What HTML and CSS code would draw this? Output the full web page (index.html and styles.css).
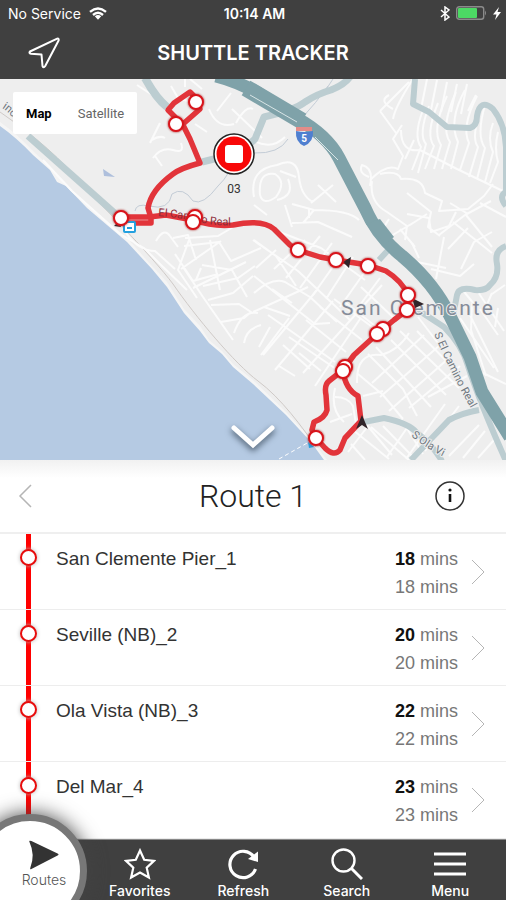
FILE: index.html
```html
<!DOCTYPE html>
<html lang="en">
<head>
<meta charset="utf-8">
<meta name="viewport" content="width=device-width, initial-scale=1">
<title>Shuttle Tracker</title>
<link rel="stylesheet" href="styles.css">
</head>
<body>
<div class="app">
  <header class="top">
    <div class="status">
      <span class="carrier">No Service
        <svg width="18" height="13" viewBox="0 0 18 13" aria-hidden="true"><g fill="none" stroke="#fff" stroke-width="2.4"><path d="M1 4.8Q9-2 17 4.8"/><path d="M4 8Q9 3.6 14 8"/></g><path d="M5.800 9.300Q9 6.800 12.200 9.300L9 12.800z" fill="#fff"/></svg>
      </span>
      <time class="clock">10:14 AM</time>
      <span class="power">
        <svg width="10" height="15" viewBox="0 0 10 15" aria-hidden="true"><path d="M1 4l8 7-4 3V1l4 3-8 7" fill="none" stroke="#fff" stroke-width="1.5"/></svg>
        <svg width="31" height="14" viewBox="0 0 31 14" aria-hidden="true"><rect x=".7" y=".7" width="27" height="12.600" rx="2.500" fill="none" stroke="#8b8b8b" stroke-width="1.400"/><rect x="2" y="2" width="19" height="10" rx="1" fill="#4cd964"/><path d="M29 4.500q2 2.500 0 5z" fill="#8b8b8b"/></svg>
        <svg width="8" height="13" viewBox="0 0 8 13" aria-hidden="true"><path d="M6 0L0 7.500h3.500L2 13l6-8H4.500z" fill="#fff"/></svg>
      </span>
    </div>
    <div class="bar">
      <button class="icon-btn locate" aria-label="My location">
        <svg width="32" height="32" viewBox="0 0 32 32"><path d="M29.200 1.600L2 14.500Q.5 16.300 3 16.800L13.500 17.500 14.500 29Q15.600 31.500 17.200 29L30.600 3.500Q31 1 29.200 1.600z" fill="none" stroke="#fff" stroke-width="2" stroke-linejoin="round"/></svg>
      </button>
      <h1>SHUTTLE TRACKER</h1>
    </div>
  </header>

  <section class="map" aria-label="Route map">
    <svg class="map-art" viewBox="0 79 506 381" preserveAspectRatio="xMidYMid slice">
      <rect y="79" width="506" height="381" fill="#eee"/>
      <path d="M0 122Q17 134 33 151L52 169 60 179 87 204 127 238 152 266 167 282 184 309 200 326 209 340 222 351 233 364 253 380 286 412 311 439 327 460H0z" fill="#f5f5f5"/>
      <path d="M0 126Q17 138 33 155L50 170 57 182 66 186 87 208 127 242 152 269 167 287 184 313 200 331 209 343 222 354 233 367 253 384 286 415 311 442 324 460H0z" fill="#b5cae3"/>
      <path d="M0 112Q55 150 80 183L118 222Q158 264 173 284C195 316 235 364 258 381S303 428 316 447" fill="none" stroke="#cfcac7"/>
      <path d="M103 169l1 7 11 1z" fill="#aebfdc"/>

      <g class="streets">
        <path d="M137 85l23 15M171 86l7 12 13 4M185 79v8M160 123l-10 20M195 124l12 8M152 140q8-5 13-2M153 158q8-11 20-8 12 4 8-7M155 156l7 10M209 109q8 20 25 15M217 111l14-18M232 109l21 20 9 9M236 123q10-18 17-14M254 141q18 9 31-4M190 79l12 10M43 160l29 31 48 43 24 14 18 18 25 24M126 233q13 18 29 18l20 18M156 241q8-14 14-5l8 11M173 238l15-3 8 25M184 246l35-4 12 19 30-13M175 254l18 27 25-7M181 269l40-28M189 240l-11 30 19 28M193 288q25-12 53-26M202 265l30 5 15 27M210 240l10 50M185 238l33-2 17-10"/>
        <path d="M183 267l20 30 30 43M203 286l35-8 17-12M208 300l25-7 20-17M211 305l28-1 12 8-7 6-23 4M234 333q8-23 24-20M244 343q2-14 17-18M196 280l5-12"/>
        <path d="M254 197q-5-28 23-32 20-9 22 12 2 19 14 25M260 195q-2-24 15-21 12 8 1 23-13 9-16-2M280 171l16 6M277 200q18-4 11-21M292 204l22 6q35 0 45 10M311 203l22-18M318 185l18 17M314 210l-11 13M285 205l7 22M292 223l26-1 34 15M309 218v-9M254 205l13 10M254 240l22 16 20 30M274 269l31-29M286 278l34-42M300 288l32-45M313 295l29-41M326 299l27-42M340 307l29-41M354 313l26-35M253 240l45 31 52 49M264 226l57 22 44 32M256 268l20-18"/>
        <path d="M370 186q4-18-8-21-4 8 7 12M370 180q17-17 28-11l5-13-10-17 9-14M380 111l29-29M380 111l16 22M393 109q-15-8-4-14M401 130q0 23 19 20l37 19 48 23M372 181q-3 21 15 31l20 14-2 14M380 174q18-4 21 5 22-2 24 14l17 8-3 10 29-2 16-13 9-12M407 193l24 19-3 15 12 9M407 214l22 4 2 14 18-6 7-14M439 235l26-20 26-14M453 222l39 31M466 215l26 32M480 203l26 14M444 237l-8 42M389 219l-10 16M413 223l-22 13M400 229l15 18M427 214l-17 11M450 203l18 11"/>
        <path d="M414 140q-6 13-9 19M423 110q-10 26-2 37l-9 23M429 106q-11 29-3 38l-8 29M438 103q-13 32-4 43l-9 23M447 96q-16 34-6 49l-7 24M456 92q-16 36-6 50l-8 27M465 90q-17 31-7 52l-7 27M477 96q-16 31-8 47l-9 27M478 119q-6 20 0 28l-9 30M485 105q-9 31 0 43l-8 31M493 123q-6 16 0 29l-8 30M498 132q-4 16 0 30l-8 21"/>
        <path d="M413 79q-18 28-20 40M427 79l-6 30M437 80l-6 30M447 82l-6 30M457 84l-6 28M467 84l-6 30M476 95l-8 16"/>
        <path d="M254 293q18-16 31-11l25 15 27 25M254 276l61 48 15-1M253 312l55-25M263 355l54-65M275 370l58-69M270 327l-11 20M279 366l16 10M283 345l27 24M299 353l22 18M289 337l50 34M306 320l40 32M320 307l42 33M334 299l41 30M268 315l67 47M261 355l28-37M303 373l79-88M315 386l45-67M346 303l38 30M361 287l36 34M290 316l-26-9M292 303l-20-14"/>
        <path d="M357 383q-1-31 24-28 18-5 28-22M358 374l25 21 20 24M368 354l35 35 14 27M376 347l55 60M391 340l55 55M400 331l59 57M372 383l52-48M380 397l59-51M389 411l60-53M409 408l51-42M428 397l39-21M363 396l20-5M417 331l41 42M418 317l23 30M335 397q13 0 18 9l3 18M335 388q-5 22 9 34M330 422l22-8M366 424l26 31M351 444l14 16M371 427l38 33M383 426l32 33M401 419l22 35M348 452l20-26M387 457l22-32M406 459l39-55M425 451l34-45M449 456l30-31M463 458l22-27M478 458l16-18M353 430l36 29"/>
        <path d="M448 249l20-21M461 269l13-27 18-10M431 269l29 7 14-12M417 262l29 6M412 243l7 15M474 304l-13-16M460 318l34 50M466 307l32 65M472 303l-1 27 15 46M480 309l18 26M478 292l26 39M492 293l-7 16M498 308l-3 19M505 285l-13 9M483 373l23 11"/>
      </g>

      <g class="creeks"><path d="M135 211q1-8 14-5 20 5 23-12 11-8 21 7 10 5 25-15 12-11 20-34M254 153q25 1 34-14M328 86q-12 17-26 32M333 79l-8 12"/></g>

      <g class="roads">
        <path d="M28 136L118 216" stroke-width="7"/>
        <path d="M145 78q11 20 22 29" stroke-width="8"/>
        <path d="M202 162l24-6q16-4 29-17l9-22q31-7 41-15 12-8 26-12 13-5 19-13" stroke-width="7"/>
        <path d="M415 79l-2 25 16 8 18 15 23 1q7-2 7-12 3-18 16-7 12 15 13 38v45q-8 4 0 14M506 246q-12 4-9 18 2 13-7 21-4 6-15 5-16-4-18 5l-3 16" stroke-width="6"/>
        <path d="M379 260l12-13M418 310l26 17q18 18 24 39 12 37 38 95" stroke-width="6"/>
        <path d="M364 422l20-4q25 5 33 15 15 11 25 28M411 460l38-40q13-7 30-10" stroke-width="6"/>
      </g>
      <path d="M216 76Q236 81 258 93L296 118Q327 135 339 158L365 208Q377 236 402 256 434 283 450 316L470 357 482 392 510 437" fill="none" stroke="#7fa2a9" stroke-width="13"/>
      <path d="M246 88L302 121" fill="none" stroke="#7fa2a9" stroke-width="17"/>
      <path d="M250 95L297 122M315 137l23 23" fill="none" stroke="#d8e5e6" stroke-width="1"/>
      <path d="M366 224l14-5 14 18-9 7z" fill="#7fa2a9"/>

      <path d="M279 459l30-17" stroke="#fff" stroke-dasharray="4 3"/>

      <g class="labels">
        <path id="ecr-west" d="M158 216q25 2 40 6 26 6 58 2" fill="none"/>
        <path id="ecr-south" d="M434 334Q452 376 474 414" fill="none"/>
        <path id="ola" d="M411 436Q428 450 452 461" fill="none"/>
        <path id="coast" d="M2 108Q9 112 20 126" fill="none"/>
        <text class="road-name"><textPath href="#coast">ino</textPath></text>
        <text class="road-name"><textPath href="#ecr-south">S El Camino Real</textPath></text>
        <text class="road-name"><textPath href="#ola">S Ola Vi</textPath></text>
        <text class="town" x="341" y="315">San Clemente</text>
      </g>

      <g fill="none" stroke="#e2343a" stroke-width="5.500" stroke-linejoin="round">
        <path d="M121 217H149L166 215 193 220Q214 227 233 225 262 219 274 229L290 245 298 250 320 257 336 260 368 265 386 271Q402 281 408 295L407 310 394 320 377 334 354 355 343 370 329 381Q324 385 326 395L327 410Q325 418 314 422L312 430 316 438 325 448Q334 457 340 450L345 438 361 421 358 396Q345 389 343 370"/>
        <path d="M121 223H151V218L148 208Q151 190 173 174 181 168 200 163L190 139 183 125 168 110 174 103 190 92 197 99 200 109 183 124"/>
      </g>
      <g class="labels on-route"><text class="road-name"><textPath href="#ecr-west">El Camino Real</textPath></text></g>
      <g fill="#30252a"><path d="M362 415l6 14-6-4-6 4zM412 298l12 6-9 4zM343 262l8-5-2 11zM114 226l5-5 2 6z"/></g>
      <rect x="124" y="222" width="11" height="10" rx="1" fill="#fff" stroke="#24a0df" stroke-width="2"/><path d="M127 228h5" stroke="#24a0df" stroke-width="2"/>
      <path d="M308 442l6 5-5 1z" fill="#24a0df"/>

      <g class="stops">
        <circle cx="196" cy="102" r="7"/><circle cx="176" cy="124" r="7"/><circle cx="121" cy="218" r="7"/>
        <circle cx="195" cy="217" r="7"/><circle cx="193" cy="222" r="7"/><circle cx="298" cy="250" r="7"/>
        <circle cx="336" cy="260" r="7"/><circle cx="368" cy="266" r="7"/><circle cx="408" cy="295" r="7"/>
        <circle cx="407" cy="310" r="7"/><circle cx="383" cy="329" r="7"/><circle cx="377" cy="334" r="7"/>
        <circle cx="345" cy="367" r="7"/><circle cx="343" cy="371" r="7"/><circle cx="316" cy="438" r="7"/>
      </g>

      <path d="M296 131q9 2 17 0 1 11-9 15-9-4-8-15z" fill="#4f7fd0"/><path d="M296 127h16v4h-16z" fill="#e38c88"/>
      <text class="shield" x="304" y="142">5</text>

      <circle cx="234" cy="154" r="20" fill="#fff" stroke="#222" stroke-width="1.500"/>
      <circle cx="234" cy="154" r="17.500" fill="#f80808"/>
      <rect x="225" y="145" width="18" height="18" rx="3" fill="#fff"/>
      <text class="bus-no" x="234" y="193">03</text>
    </svg>
    <div class="map-type">
      <button class="type active">Map</button>
      <button class="type">Satellite</button>
    </div>
    <button class="icon-btn collapse" aria-label="Hide map">
      <svg width="50" height="34" viewBox="0 0 50 34"><path d="M6 6l19 17L44 6" fill="none" stroke="#fff" stroke-width="5" stroke-linecap="round"/></svg>
    </button>
  </section>

  <main>
    <div class="route-head">
      <button class="icon-btn" aria-label="Previous route"><svg width="14" height="24" viewBox="0 0 14 24"><path d="M13 1L2 12l11 11" fill="none" stroke="#b5b5b5" stroke-width="1.500"/></svg></button>
      <h2>Route 1</h2>
      <button class="icon-btn info" aria-label="Route information"><svg width="32" height="32" viewBox="0 0 32 32"><circle cx="16" cy="16" r="14" fill="none" stroke="#333" stroke-width="1.500"/><path d="M16 14v8" stroke="#111" stroke-width="2.600"/><circle cx="16" cy="10" r="1.600" fill="#111"/></svg></button>
    </div>
    <ul class="stop-list">
      <li><a href="#stop-1"><span class="dot"></span><span class="name">San Clemente Pier_1</span><span class="eta"><span><b>18</b> mins</span><span>18 mins</span></span><svg class="chev" width="14" height="28" viewBox="0 0 14 28"><path d="M1 2l12 12L1 26"/></svg></a></li>
      <li><a href="#stop-2"><span class="dot"></span><span class="name">Seville (NB)_2</span><span class="eta"><span><b>20</b> mins</span><span>20 mins</span></span><svg class="chev" width="14" height="28" viewBox="0 0 14 28"><path d="M1 2l12 12L1 26"/></svg></a></li>
      <li><a href="#stop-3"><span class="dot"></span><span class="name">Ola Vista (NB)_3</span><span class="eta"><span><b>22</b> mins</span><span>22 mins</span></span><svg class="chev" width="14" height="28" viewBox="0 0 14 28"><path d="M1 2l12 12L1 26"/></svg></a></li>
      <li><a href="#stop-4"><span class="dot"></span><span class="name">Del Mar_4</span><span class="eta"><span><b>23</b> mins</span><span>23 mins</span></span><svg class="chev" width="14" height="28" viewBox="0 0 14 28"><path d="M1 2l12 12L1 26"/></svg></a></li>
    </ul>
  </main>

  <nav class="tabs">
    <button class="tab current"><svg width="32" height="32" viewBox="0 0 32 32"><path d="M1 2q-1-2 2-1l27 13q2 1 0 2L3 30q-2 1-1-2 5-13-1-26z" fill="#333"/></svg><span>Routes</span></button>
    <button class="tab"><svg width="32" height="32" viewBox="0 0 32 32"><path d="M16 2.500l4.200 9.300 9.800 1-7.300 6.900 2.200 9.800L16 24.500l-8.900 5 2.200-9.800L2 12.800l9.800-1z" fill="none" stroke="#fff" stroke-width="2.200"/></svg><span>Favorites</span></button>
    <button class="tab"><svg width="32" height="32" viewBox="0 0 32 32"><path d="M27 9A13.200 13.200 0 1 0 28.500 21" fill="none" stroke="#fff" stroke-width="3.200"/><path d="M31 3.500V14L21 11z" fill="#fff"/></svg><span>Refresh</span></button>
    <button class="tab"><svg width="32" height="32" viewBox="0 0 32 32"><circle cx="12.500" cy="12.500" r="11" fill="none" stroke="#fff" stroke-width="2.400"/><path d="M20.500 20.500L31 31" stroke="#fff" stroke-width="3"/></svg><span>Search</span></button>
    <button class="tab"><svg width="32" height="32" viewBox="0 0 32 32"><path d="M0 6h32M0 16h32M0 26h32" stroke="#fff" stroke-width="3"/></svg><span>Menu</span></button>
  </nav>
</div>
</body>
</html>
```
FILE: styles.css
```css
*, *::before { box-sizing: border-box; }
body { margin: 0; background: #fff; font-family: "Liberation Sans", Arial, sans-serif; color: #222; }
button { border: 0; padding: 0; background: none; color: inherit; font: inherit; cursor: pointer; }
svg { display: block; }
h1, h2 { margin: 0; }
.app { display: flex; flex-direction: column; min-height: 100vh; overflow: clip; }

.top { background: #404040; color: #fff; font-family: Inter, sans-serif; }
.status { display: grid; grid-template-columns: 1fr auto 1fr; align-items: center; height: 26px; padding: 0 5px 0 8px; font-size: 14px; }
.carrier, .power { display: flex; align-items: center; gap: 8px; }
.power { justify-content: flex-end; gap: 6px; }
.clock { font-weight: 600; }
.bar { display: grid; grid-template-columns: 1fr auto 1fr; align-items: center; height: 53px; padding: 0 28px; }
.bar h1 { font-size: 20px; font-weight: 600; line-height: 24px; }
.icon-btn { display: flex; }

.map { position: relative; aspect-ratio: 506 / 381; overflow: hidden; }
.map-art { width: 100%; height: 100%; }
.streets { fill: none; stroke: #fbfbfb; stroke-width: 2; stroke-linejoin: round; }
.creeks { fill: none; stroke: #c3ccd6; stroke-width: 1; }
.roads { fill: none; stroke: #bccdd1; stroke-linejoin: round; }
.labels { font-family: Roboto, sans-serif; fill: #6f7780; stroke: #eee; stroke-width: 2; paint-order: stroke; }
.labels path { stroke: none; }
.on-route { fill: #8c2a35; stroke: none; }
.road-name { font-size: 11px; }
.town { font-size: 21px; letter-spacing: 2px; fill: #858b98; }
.stops { fill: #fff; stroke: #d9141b; stroke-width: 2; filter: drop-shadow(0 0 1px #a22); }
.shield { font: bold 10px Roboto, sans-serif; fill: #fff; text-anchor: middle; }
.bus-no { font: 12px Roboto, sans-serif; fill: #333; text-anchor: middle; }
.map-type { position: absolute; top: 13px; left: 13px; display: flex; gap: 26px; padding: 0 13px; height: 42px; background: #fff; border-radius: 2px; font: 13px Roboto, sans-serif; }
.type { color: #666; }
.type.active { color: #000; font-weight: 700; }
.collapse { position: absolute; left: 50%; bottom: 4px; translate: -50% 0; filter: drop-shadow(0 3px 3px #456); }

.route-head { display: grid; grid-template-columns: 1fr auto 1fr; align-items: center; height: 74px; padding: 0 18px; background: linear-gradient(#f1f1f1, #fff 18px); border-bottom: 2px solid #efefef; }
.route-head h2 { font: 300 32px/36px Roboto, sans-serif; }
.info { justify-self: end; margin-right: 22px; }

.stop-list { margin: 0; padding: 0; list-style: none; }
.stop-list li { border-bottom: 1px solid #ededed; }
.stop-list li:last-child { border: 0; }
.stop-list a { display: grid; grid-template-columns: 56px 1fr auto 27px; align-items: start; height: 75px; padding-right: 21px; color: #333; text-decoration: none; }
.dot { position: relative; height: 100%; background: linear-gradient(#f00, #f00) 26px 0 / 5px 100% no-repeat; }
.dot::before { content: ""; position: absolute; left: 20px; top: 15px; width: 17px; height: 17px; border: 2px solid #e80c0c; border-radius: 50%; background: #fff; box-shadow: 0 0 4px #bbb; }
.name { padding-top: 13px; font-size: 19px; line-height: 24px; }
.eta { display: grid; padding-top: 11px; font-size: 18px; line-height: 28px; color: #777; text-align: right; }
.eta b { color: #111; }
.chev { margin: 24px 0 0 13px; fill: none; stroke: #b5b5b5; stroke-width: 1; }

.tabs { position: sticky; bottom: 0; display: flex; height: 60px; margin-top: auto; padding-right: 4px; background: #404040; color: #fff; font: 500 14px/16px Inter, sans-serif; box-shadow: 0 -1px 1px #888; }
.tab { flex: 1; display: flex; flex-direction: column; align-items: center; justify-content: flex-end; gap: 3px; padding-bottom: 1px; }
.current { position: relative; flex: 0 0 88px; padding-bottom: 12px; color: #555; font-weight: 300; gap: 1px; }
.current::before { content: ""; position: absolute; left: -27px; top: -26px; width: 114px; height: 114px; border: 7px solid #777; border-radius: 50%; background: #fff; box-shadow: 0 0 20px #444; }
.current > * { position: relative; }
```
